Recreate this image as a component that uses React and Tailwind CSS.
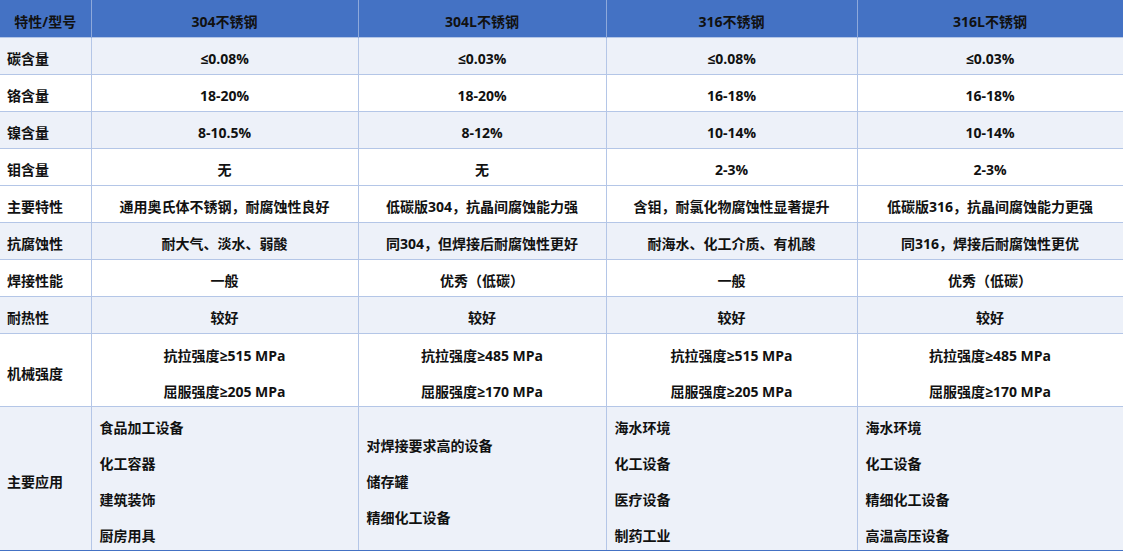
import React from 'react';

const cols = ['304不锈钢', '304L不锈钢', '316不锈钢', '316L不锈钢'];

const rows = [
  { label: '碳含量', values: ['≤0.08%', '≤0.03%', '≤0.08%', '≤0.03%'], shaded: true },
  { label: '铬含量', values: ['18-20%', '18-20%', '16-18%', '16-18%'] },
  { label: '镍含量', values: ['8-10.5%', '8-12%', '10-14%', '10-14%'], shaded: true },
  { label: '钼含量', values: ['无', '无', '2-3%', '2-3%'] },
  {
    label: '主要特性',
    values: ['通用奥氏体不锈钢，耐腐蚀性良好', '低碳版304，抗晶间腐蚀能力强', '含钼，耐氯化物腐蚀性显著提升', '低碳版316，抗晶间腐蚀能力更强'],
  },
  {
    label: '抗腐蚀性',
    values: ['耐大气、淡水、弱酸', '同304，但焊接后耐腐蚀性更好', '耐海水、化工介质、有机酸', '同316，焊接后耐腐蚀性更优'],
    shaded: true,
  },
  { label: '焊接性能', values: ['一般', '优秀（低碳）', '一般', '优秀（低碳）'] },
  { label: '耐热性', values: ['较好', '较好', '较好', '较好'], shaded: true },
];

const strength = [
  ['抗拉强度≥515 MPa', '屈服强度≥205 MPa'],
  ['抗拉强度≥485 MPa', '屈服强度≥170 MPa'],
  ['抗拉强度≥515 MPa', '屈服强度≥205 MPa'],
  ['抗拉强度≥485 MPa', '屈服强度≥170 MPa'],
];

const uses = [
  ['食品加工设备', '化工容器', '建筑装饰', '厨房用具'],
  ['对焊接要求高的设备', '储存罐', '精细化工设备'],
  ['海水环境', '化工设备', '医疗设备', '制药工业'],
  ['海水环境', '化工设备', '精细化工设备', '高温高压设备'],
];

const font = { fontFamily: '"Open Sans", "Noto Sans CJK SC", sans-serif' };

export default function App() {
  return (
    <div className="w-[1123px] h-[552px] bg-white overflow-hidden text-[14px] font-bold text-[#111]" style={font}>
      <table className="w-[1123px] table-fixed border-collapse border-r border-b border-[#4472C4]">
        <colgroup>
          <col className="w-[91px]" />
          <col className="w-[267px]" />
          <col className="w-[248px]" />
          <col className="w-[251px]" />
          <col className="w-[266px]" />
        </colgroup>
        <thead>
          <tr className="bg-[#4472C4]">
            <th className="h-[37px] p-0 text-center border-r border-[#8EA9DB]">
              <div className="h-[37px] pt-[6px] flex items-center justify-center">特性/型号</div>
            </th>
            {cols.map((c) => (
              <th key={c} className="h-[37px] p-0 text-center border-r border-[#8EA9DB]">
                <div className="h-[37px] pt-[6px] flex items-center justify-center">{c}</div>
              </th>
            ))}
          </tr>
        </thead>
        <tbody>
          {rows.map((r) => (
            <tr key={r.label} className={r.shaded ? 'bg-[#EDF1F9]' : 'bg-white'}>
              <td className="h-[37px] p-0 border border-[#B4C6E7] border-l-0">
                <div className="h-[36px] pt-[4px] px-[7px] flex items-center">{r.label}</div>
              </td>
              {r.values.map((v, i) => (
                <td key={i} className="h-[37px] p-0 border border-[#B4C6E7]">
                  <div className="h-[36px] pt-[4px] flex items-center justify-center whitespace-nowrap">{v}</div>
                </td>
              ))}
            </tr>
          ))}
          <tr className="bg-white">
            <td className="h-[73px] p-0 border border-[#B4C6E7] border-l-0">
              <div className="h-[72px] pt-[6px] px-[7px] flex items-center">机械强度</div>
            </td>
            {strength.map((s, i) => (
              <td key={i} className="h-[73px] p-0 border border-[#B4C6E7]">
                <div className="h-[72px] pt-[6px] flex flex-col items-center justify-center">
                  {s.map((line) => (
                    <div key={line} className="h-[36px] shrink-0 flex items-center">{line}</div>
                  ))}
                </div>
              </td>
            ))}
          </tr>
          <tr className="bg-[#EDF1F9]">
            <td className="h-[144px] p-0 border border-[#B4C6E7] border-l-0 border-b-[#4472C4]">
              <div className="h-[143px] pt-[6px] px-[7px] flex items-center">主要应用</div>
            </td>
            {uses.map((u, i) => (
              <td key={i} className="h-[144px] p-0 border border-[#B4C6E7] border-b-[#4472C4]">
                <div className="h-[143px] pt-[6px] px-[8px] flex flex-col justify-center">
                  {u.map((line) => (
                    <div key={line} className="h-[36px] shrink-0 flex items-center">{line}</div>
                  ))}
                </div>
              </td>
            ))}
          </tr>
        </tbody>
      </table>
    </div>
  );
}
